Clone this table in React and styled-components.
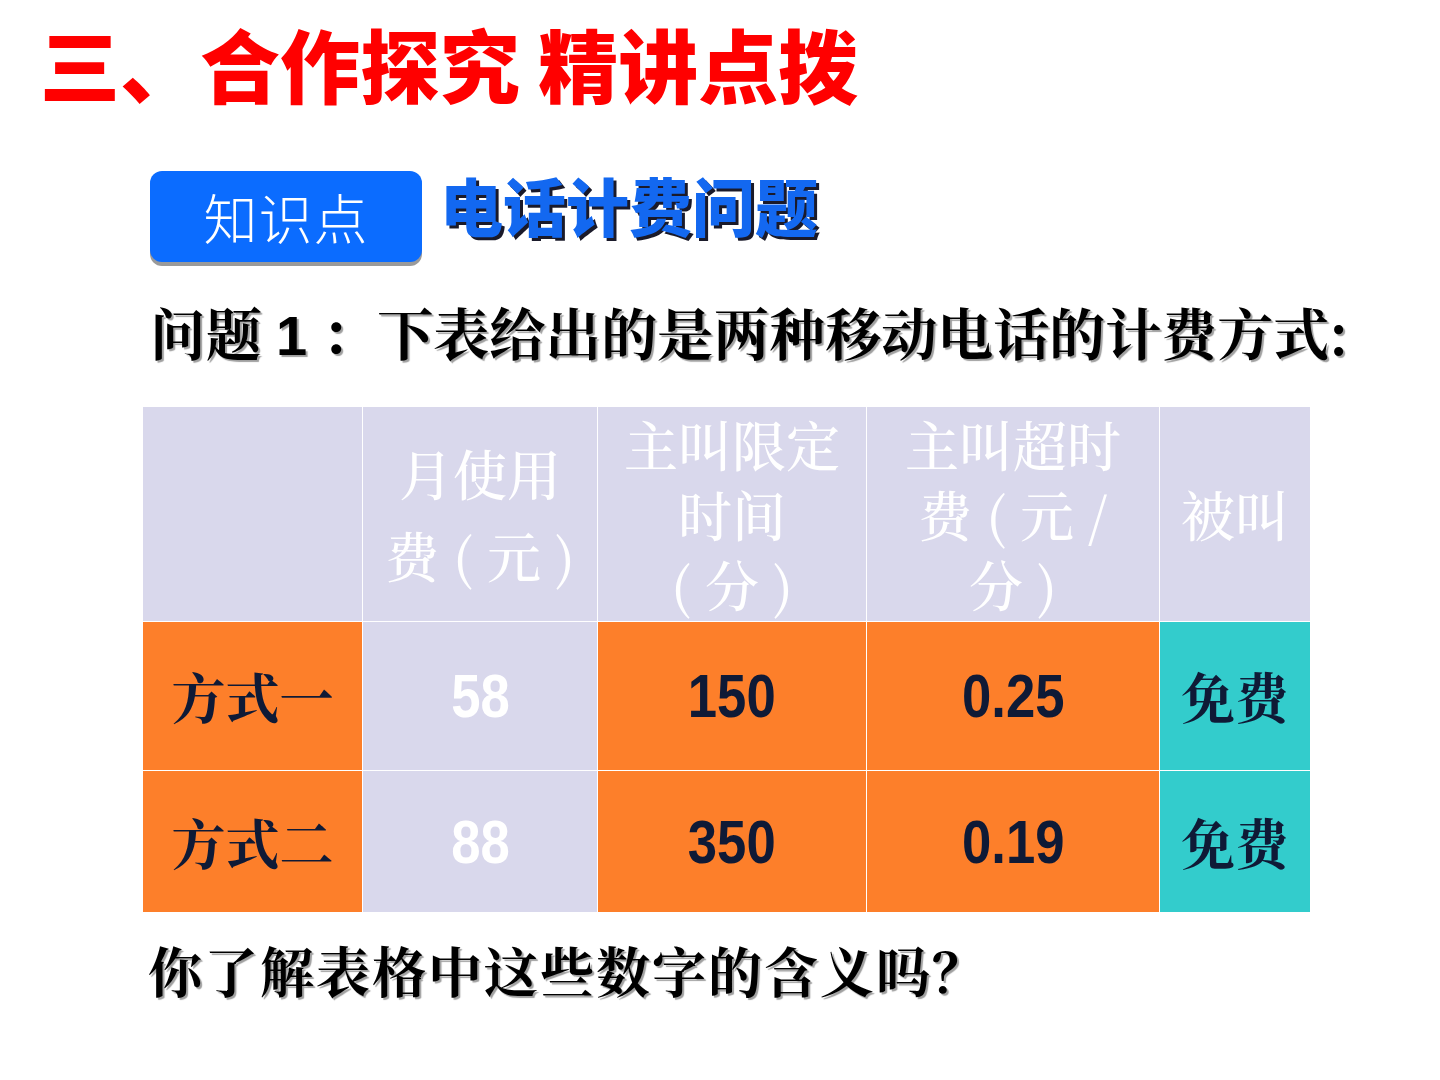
import React from 'react';
import styled, { createGlobalStyle } from 'styled-components';

const GlobalStyle = createGlobalStyle`
  html, body {
    margin: 0;
    padding: 0;
    background: #fff;
  }
  body {
    font-family: "Noto Sans CJK SC", "Noto Sans", sans-serif;
  }
`;

const SERIF = '"Noto Serif CJK SC", "Noto Sans CJK SC", serif';

const Slide = styled.div`
  width: 1440px;
  height: 1080px;
  box-sizing: border-box;
  padding: 22px 0 0 0;
  overflow: hidden;
`;

const Title = styled.h1`
  margin: 0 0 0 40px;
  font-size: 80px;
  line-height: 80px;
  font-weight: 900;
  color: #ff0000;
  white-space: nowrap;
`;

const TopicRow = styled.div`
  display: flex;
  align-items: flex-start;
  gap: 18px;
  margin: 69px 0 0 150px;
`;

const Badge = styled.div`
  width: 272px;
  height: 91px;
  border-radius: 12px;
  background: #0b6cff;
  box-shadow: 0 4px 0 #9a9a9a;
  display: flex;
  align-items: center;
  justify-content: center;
  color: #fff;
  font-size: 54px;
  font-weight: 300;
  letter-spacing: 1px;
`;

const Topic = styled.div`
  margin-top: 1px;
  font-size: 63px;
  line-height: 63px;
  font-weight: 900;
  color: #1368f0;
  text-shadow: 3px 3px 0 #1a1a2a;
  white-space: nowrap;
`;

const Question = styled.p`
  margin: 41px 0 0 150px;
  font-family: ${SERIF};
  font-size: 56px;
  line-height: 56px;
  font-weight: 700;
  color: #000;
  text-shadow: 2px 2px 1px #a0a0a0;
  white-space: nowrap;
  b {
    font-family: "Liberation Sans", Arial, sans-serif;
    font-weight: 700;
  }
`;

const Table = styled.div`
  display: grid;
  grid-template-columns: 219px 234px 268px 292px 150px;
  grid-template-rows: 214px 148px 141px;
  gap: 1px;
  width: max-content;
  margin: 43px 0 0 143px;
  background: #fff;
`;

const Cell = styled.div`
  background: ${(p) => p.$bg};
  display: flex;
  flex-direction: column;
  align-items: center;
  justify-content: center;
  text-align: center;
`;

const HeadText = styled.div`
  font-family: ${SERIF};
  font-size: 54px;
  line-height: ${(p) => p.$lh || 70}px;
  font-weight: 500;
  color: #fff;
  white-space: nowrap;
`;

const Label = styled.div`
  font-family: ${SERIF};
  font-size: 54px;
  line-height: 1;
  font-weight: 700;
  color: #0f1a36;
`;

const Num = styled.span`
  display: inline-block;
  font-family: "Liberation Sans", Arial, sans-serif;
  font-size: 62px;
  line-height: 1;
  font-weight: 700;
  color: ${(p) => p.$color};
  transform: scaleX(0.85);
`;

const Footer = styled.p`
  margin: 31px 0 0 148px;
  font-family: ${SERIF};
  font-size: 54px;
  line-height: 54px;
  font-weight: 700;
  letter-spacing: 2px;
  color: #000;
  text-shadow: 2px 2px 1px #a0a0a0;
  white-space: nowrap;
`;

const LAV = '#d9d8ec';
const ORANGE = '#fd7f2a';
const TEAL = '#33cccc';
const NAVY = '#0f1a36';

const rows = [
  { label: '方式一', fee: '58', mins: '150', over: '0.25' },
  { label: '方式二', fee: '88', mins: '350', over: '0.19' },
];

export default function App() {
  return (
    <>
      <GlobalStyle />
      <Slide>
        <Title>三、合作探究 精讲点拨</Title>

        <TopicRow>
          <Badge>知识点</Badge>
          <Topic>电话计费问题</Topic>
        </TopicRow>

        <Question>
          问题 <b>1</b> ：下表给出的是两种移动电话的计费方式:
        </Question>

        <Table>
          <Cell $bg={LAV} />
          <Cell $bg={LAV}>
            <HeadText $lh={82}>月使用</HeadText>
            <HeadText $lh={82}>费 ( 元 )</HeadText>
          </Cell>
          <Cell $bg={LAV}>
            <HeadText>主叫限定</HeadText>
            <HeadText>时间</HeadText>
            <HeadText>( 分 )</HeadText>
          </Cell>
          <Cell $bg={LAV}>
            <HeadText>主叫超时</HeadText>
            <HeadText>费 ( 元 /</HeadText>
            <HeadText>分 )</HeadText>
          </Cell>
          <Cell $bg={LAV}>
            <HeadText>被叫</HeadText>
          </Cell>

          {rows.map((r) => (
            <React.Fragment key={r.label}>
              <Cell $bg={ORANGE}>
                <Label>{r.label}</Label>
              </Cell>
              <Cell $bg={LAV}>
                <Num $color="#fff">{r.fee}</Num>
              </Cell>
              <Cell $bg={ORANGE}>
                <Num $color={NAVY}>{r.mins}</Num>
              </Cell>
              <Cell $bg={ORANGE}>
                <Num $color={NAVY}>{r.over}</Num>
              </Cell>
              <Cell $bg={TEAL}>
                <Label>免费</Label>
              </Cell>
            </React.Fragment>
          ))}
        </Table>

        <Footer>你了解表格中这些数字的含义吗？</Footer>
      </Slide>
    </>
  );
}
